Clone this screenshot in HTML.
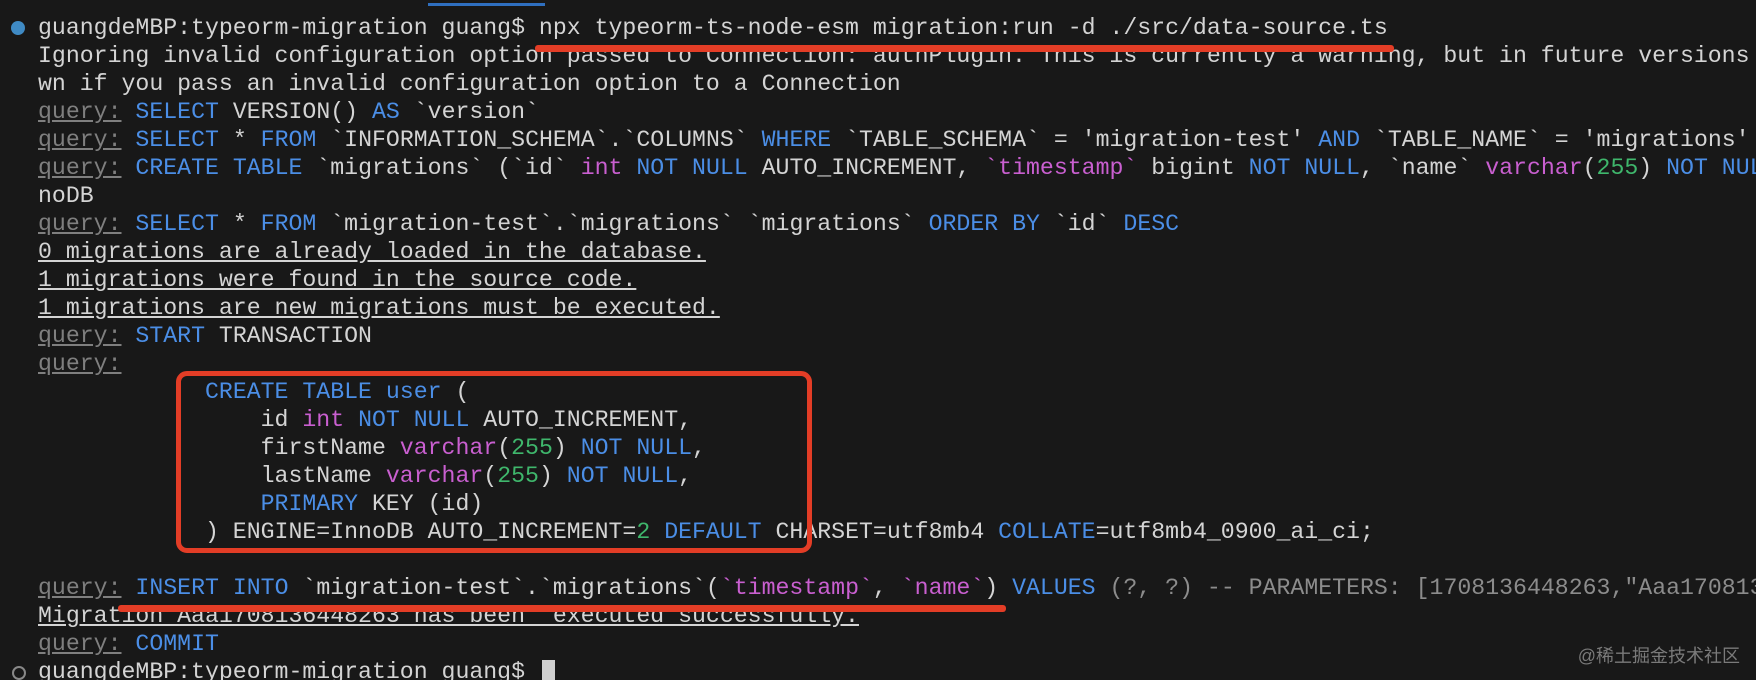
<!DOCTYPE html>
<html><head><meta charset="utf-8"><style>
html,body{margin:0;padding:0;background:#181818;width:1756px;height:680px;overflow:hidden;position:relative}
.t{position:absolute;left:38px;top:14px;width:1718px;height:666px;overflow:hidden;font-family:"Liberation Mono",monospace;font-size:23.2px;line-height:28px;color:#d4d4d4;white-space:pre}
.q{color:#7f7f7f;text-decoration:underline}
.b{color:#4b8ee6}
.m{color:#c95fd0}
.g{color:#3fb76c}
.d{color:#8c8c8c}
.u{text-decoration:underline}
.r{position:absolute;background:#e33d26;border-radius:3px}
</style></head><body>
<div class="t">guangdeMBP:typeorm-migration guang$ npx typeorm-ts-node-esm migration:run -d ./src/data-source.ts
Ignoring invalid configuration option passed to Connection: authPlugin. This is currently a warning, but in future versions this will thro
wn if you pass an invalid configuration option to a Connection
<span class="q">query:</span> <span class="b">SELECT</span> VERSION() <span class="b">AS</span> `version`
<span class="q">query:</span> <span class="b">SELECT</span> * <span class="b">FROM</span> `INFORMATION_SCHEMA`.`COLUMNS` <span class="b">WHERE</span> `TABLE_SCHEMA` = 'migration-test' <span class="b">AND</span> `TABLE_NAME` = 'migrations'
<span class="q">query:</span> <span class="b">CREATE TABLE</span> `migrations` (`id` <span class="m">int</span> <span class="b">NOT NULL</span> AUTO_INCREMENT, <span class="m">`timestamp`</span> bigint <span class="b">NOT NULL</span>, `name` <span class="m">varchar</span>(<span class="g">255</span>) <span class="b">NOT NULL</span>
noDB
<span class="q">query:</span> <span class="b">SELECT</span> * <span class="b">FROM</span> `migration-test`.`migrations` `migrations` <span class="b">ORDER BY</span> `id` <span class="b">DESC</span>
<span class="u">0 migrations are already loaded in the database.</span>
<span class="u">1 migrations were found in the source code.</span>
<span class="u">1 migrations are new migrations must be executed.</span>
<span class="q">query:</span> <span class="b">START</span> TRANSACTION
<span class="q">query:</span>
            <span class="b">CREATE TABLE</span> <span class="b">user</span> (
                id <span class="m">int</span> <span class="b">NOT NULL</span> AUTO_INCREMENT,
                firstName <span class="m">varchar</span>(<span class="g">255</span>) <span class="b">NOT NULL</span>,
                lastName <span class="m">varchar</span>(<span class="g">255</span>) <span class="b">NOT NULL</span>,
                <span class="b">PRIMARY</span> KEY (id)
            ) ENGINE=InnoDB AUTO_INCREMENT=<span class="g">2</span> <span class="b">DEFAULT</span> CHARSET=utf8mb4 <span class="b">COLLATE</span>=utf8mb4_0900_ai_ci;

<span class="q">query:</span> <span class="b">INSERT INTO</span> `migration-test`.`migrations`(<span class="m">`timestamp`</span>, <span class="m">`name`</span>) <span class="b">VALUES</span> <span class="d">(?, ?) -- PARAMETERS: [1708136448263,"Aaa1708136448263"]</span>
<span class="u">Migration Aaa1708136448263 has been  executed successfully.</span>
<span class="q">query:</span> <span class="b">COMMIT</span>
guangdeMBP:typeorm-migration guang$ </div>
<div style="position:absolute;left:542px;top:660px;width:13px;height:20px;background:#d0d0d0"></div>
<div style="position:absolute;left:11px;top:21px;width:14px;height:14px;border-radius:50%;background:#3f8ac4"></div>
<div style="position:absolute;left:12px;top:666px;width:10px;height:10px;border-radius:50%;border:2px solid #888"></div>
<div style="position:absolute;left:428px;top:3px;width:117px;height:3px;background:#2f6fbf"></div>
<div class="r" style="left:535px;top:45px;width:859px;height:7px"></div>
<div class="r" style="left:118px;top:605px;width:888px;height:7px"></div>
<div style="position:absolute;left:176px;top:371px;width:626px;height:172px;border:5px solid #e33d26;border-radius:11px"></div>
<div style="position:absolute;right:16px;top:642px;white-space:nowrap;font-family:'Liberation Sans','Noto Sans CJK SC',sans-serif;font-size:18px;color:#7a7a7a">@稀土掘金技术社区</div>
</body></html>
